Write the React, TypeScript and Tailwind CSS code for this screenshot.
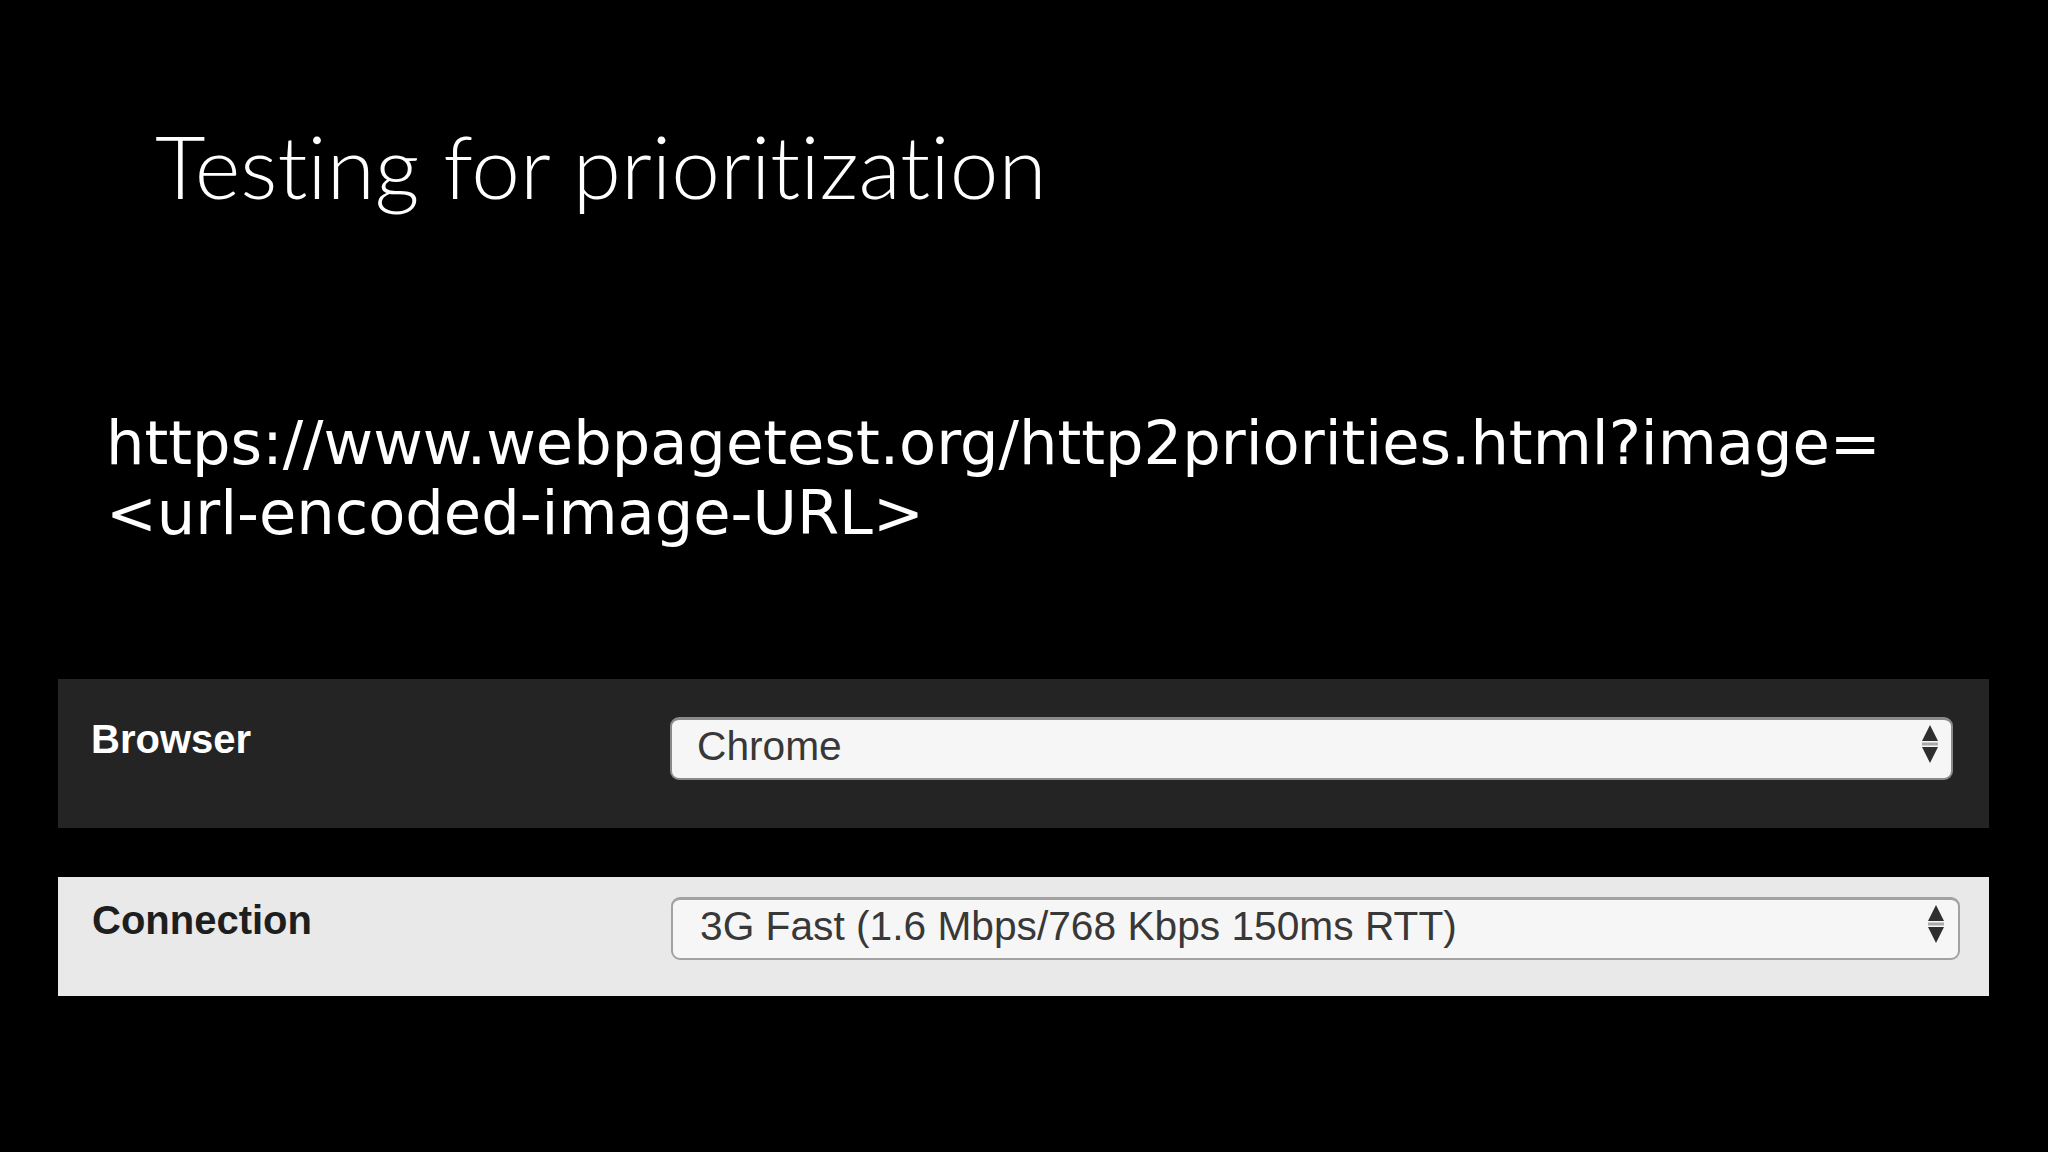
const Arrows = () => (
  <svg width="18" height="42" viewBox="0 0 18 42" className="shrink-0">
    <polygon points="1,18 17,18 9,2" fill="#2f2f2f" />
    <rect x="1" y="19.5" width="16" height="3" fill="#a9a9a9" />
    <polygon points="1,24 17,24 9,40" fill="#2f2f2f" />
  </svg>
)

type RowProps = {
  label: string
  value: string
  dark?: boolean
}

const FormRow = ({ label, value, dark }: RowProps) => {
  return (
    <div
      className={
        dark
          ? "flex items-start w-[1931px] h-[149px] bg-[#242424] pl-[33px] pt-[38px]"
          : "flex items-start w-[1931px] h-[119px] bg-[#e9e9e9] pl-[34px] pt-[20px]"
      }
    >
      <div
        className={
          dark
            ? "w-[579px] mt-[2px] text-[40px] leading-[40px] font-bold text-white"
            : "w-[579px] mt-[3px] text-[40px] leading-[40px] font-bold text-[#1e1e1e]"
        }
        style={{ fontFamily: '"Liberation Sans", Arial, sans-serif' }}
      >
        {label}
      </div>
      <div
        className={
          dark
            ? "flex items-start justify-between w-[1283px] h-[63px] rounded-[9px] bg-[#f6f6f6] border-2 border-t-[3px] border-[#8a8a8a] pl-[25px] pr-[12px] pt-[6px]"
            : "flex items-start justify-between w-[1289px] h-[63px] rounded-[9px] bg-[#f6f6f6] border-2 border-t-[3px] border-[#a2a2a2] pl-[27px] pr-[13px] pt-[6px]"
        }
      >
        <span
          className="text-[40.7px] leading-[40px] text-[#383838]"
          style={{ fontFamily: '"Liberation Sans", Arial, sans-serif' }}
        >
          {value}
        </span>
        <div className="-mt-[3px]">
          <Arrows />
        </div>
      </div>
    </div>
  )
}

export default function App() {
  return (
    <div className="w-[2048px] h-[1152px] bg-black overflow-hidden">
      <h1
        className="pl-[155px] pt-[123px] text-[87.4px] leading-[86px] font-light text-white [font-variant-ligatures:none]"
        style={{ fontFamily: "Lato, 'Open Sans', sans-serif" }}
      >
        Testing for prioritization
      </h1>

      <div
        className="pl-[106px] mt-[199px] text-[60.7px] leading-[70px] text-white"
        style={{ fontFamily: '"DejaVu Sans", Verdana, sans-serif' }}
      >
        <div>https://www.webpagetest.org/http2priorities.html?image=</div>
        <div>&lt;url-encoded-image-URL&gt;</div>
      </div>

      <div className="flex flex-col gap-[49px] pl-[58px] mt-[131px]">
        <FormRow label="Browser" value="Chrome" dark />
        <FormRow label="Connection" value="3G Fast (1.6 Mbps/768 Kbps 150ms RTT)" />
      </div>
    </div>
  )
}
